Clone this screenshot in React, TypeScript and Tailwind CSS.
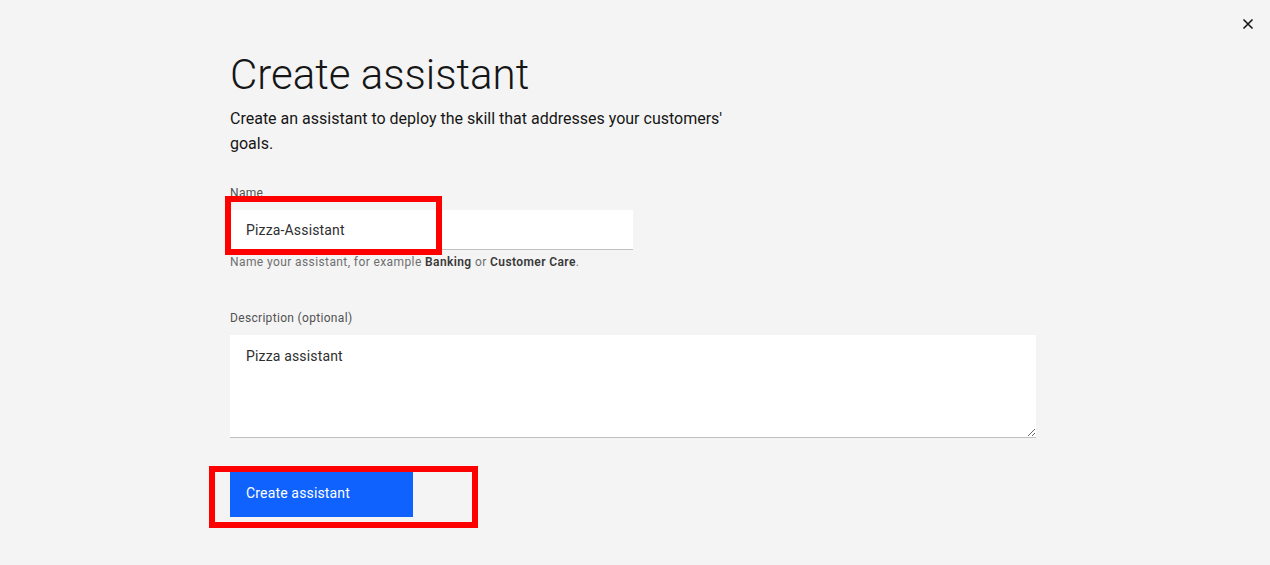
import React from "react";

const font = { fontFamily: "Roboto, 'Liberation Sans', sans-serif" };

export default function App() {
  return (
    <div className="relative w-[1270px] h-[565px] bg-[#f4f4f4] overflow-hidden text-[#161616]" style={font}>
      {/* close */}
      <button className="absolute right-[16px] top-[18px] w-[12px] h-[12px] flex items-center justify-center">
        <svg width="12" height="12" viewBox="0 0 12 12" fill="none">
          <path d="M1.5 1.5L10.5 10.5M10.5 1.5L1.5 10.5" stroke="#161616" strokeWidth="1.6" />
        </svg>
      </button>

      <div className="pl-[230px] pt-[50px] w-[1036px]">
        <h1 className="text-[42px] leading-[50px] font-light">Create assistant</h1>
        <p className="mt-[6px] text-[16px] leading-[25px] max-w-[520px]">
          Create an assistant to deploy the skill that addresses your customers'
          <br />
          goals.
        </p>

        {/* name */}
        <div className="mt-[29px]">
          <label className="block text-[12px] leading-[16px] tracking-[0.32px] text-[#525252] mb-[9px]">Name</label>
          <input
            defaultValue="Pizza-Assistant"
            className="block w-[403px] h-[40px] bg-white border-b border-[#c0c0c0] px-[16px] text-[14px] tracking-[0.16px] text-[#2e2e2e] outline-none"
          />
          <p className="mt-[4px] text-[12px] leading-[16px] tracking-[0.4px] text-[#6f6f6f]">
            Name your assistant, for example <span className="font-semibold text-[#393939]">Banking</span> or{" "}
            <span className="font-semibold text-[#393939]">Customer Care</span>.
          </p>
        </div>

        {/* description */}
        <div className="mt-[40px]">
          <label className="block text-[12px] leading-[16px] tracking-[0.32px] text-[#525252] mb-[9px]">
            Description (optional)
          </label>
          <textarea
            defaultValue="Pizza assistant"
            className="block w-[806px] h-[103px] bg-white border-b border-[#c0c0c0] px-[16px] pt-[11px] text-[14px] leading-[20px] tracking-[0.16px] text-[#2e2e2e] outline-none"
          />
        </div>

        <button className="mt-[31px] h-[48px] w-[183px] bg-[#0f62fe] text-white text-[14px] tracking-[0.16px] text-left pl-[16px]">
          Create assistant
        </button>
      </div>

      {/* annotation boxes */}
      <div className="absolute left-[225px] top-[196px] w-[217px] h-[59px] border-[6px] border-[#ff0000]" />
      <div className="absolute left-[209px] top-[466px] w-[269px] h-[62px] border-[6px] border-[#ff0000]" />
    </div>
  );
}
